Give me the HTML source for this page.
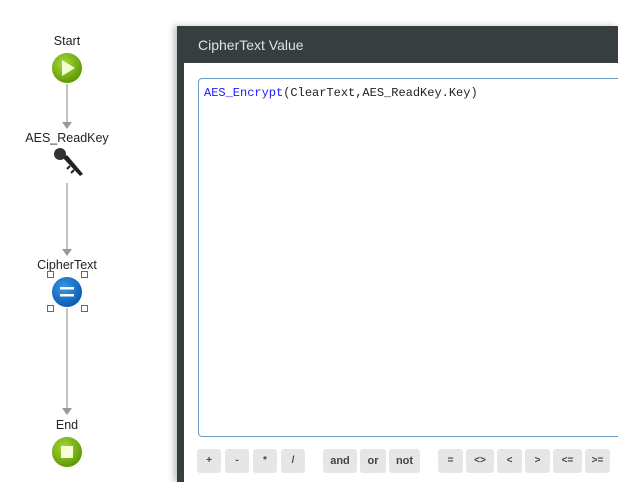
<!DOCTYPE html>
<html><head><style>
html,body{margin:0;width:618px;height:482px;overflow:hidden;}
body{background:#fff;position:relative;font-family:"Segoe UI","Liberation Sans",sans-serif;}
.lbl{position:absolute;font-size:12.5px;color:#222;width:120px;text-align:center;left:7px;}
.dlg{position:absolute;left:177px;top:26px;width:441px;height:456px;background:#363e3f;box-shadow:-3px 0 6px rgba(0,0,0,.25);}
.hdr{position:absolute;left:198px;top:37px;color:#dfe3e3;font-size:14px;}
.body{position:absolute;left:184px;top:63px;width:434px;height:419px;background:#fff;}
.ed{position:absolute;left:198px;top:78px;width:440px;height:357px;border:1px solid #6f9cc6;border-radius:4px;}
.code{position:absolute;left:204px;top:86px;font-family:"Liberation Mono",monospace;font-size:12px;color:#222;}
.b{position:absolute;top:449px;height:24px;background:#e6e6e6;border-radius:3px;font-family:"Liberation Sans",sans-serif;font-size:10px;color:#444;text-align:center;line-height:24px;font-weight:bold;}
.h{position:absolute;width:5px;height:5px;border:1px solid #1a7ad4;background:#fff;}
</style></head><body>
<svg width="140" height="482" style="position:absolute;left:0;top:0">
<defs>
<radialGradient id="g" cx="40%" cy="35%" r="65%"><stop offset="0" stop-color="#a6d93a"/><stop offset="1" stop-color="#5e9a05"/></radialGradient>
<radialGradient id="bl" cx="40%" cy="35%" r="65%"><stop offset="0" stop-color="#3a95e6"/><stop offset="1" stop-color="#0a5db3"/></radialGradient>
</defs>
<g stroke="#a0a0a0" stroke-width="1.3"><line x1="67" y1="84" x2="67" y2="124"/><line x1="67" y1="183" x2="67" y2="251"/><line x1="67" y1="308" x2="67" y2="410"/></g>
<g fill="#999"><path d="M62 122h10l-5 7z"/><path d="M62 249h10l-5 7z"/><path d="M62 408h10l-5 7z"/></g>
<circle cx="67" cy="68" r="15" fill="url(#g)"/><path d="M62 60v16l13-8z" fill="#f4ffd0"/>
<g><circle cx="60" cy="154" r="6" fill="#333"/><path d="M63 158l17 18 3-2-16-19z" fill="#222"/><path d="M70 166l-3 3M74 170l-3 3" stroke="#222" stroke-width="2"/></g>
<circle cx="67" cy="292" r="15" fill="url(#bl)"/><rect x="60" y="287" width="14" height="2.5" fill="#fff"/><rect x="60" y="294" width="14" height="2.5" fill="#fff"/>
<circle cx="67" cy="452" r="15" fill="url(#g)"/><rect x="61" y="446" width="12" height="12" fill="#f6ffd6"/>
</svg>
<div class="lbl" style="top:34px">Start</div>
<div class="lbl" style="top:131px">AES_ReadKey</div>
<div class="lbl" style="top:258px">CipherText</div>
<div class="lbl" style="top:418px">End</div>
<div class="h" style="left:47px;top:271px"></div><div class="h" style="left:81px;top:271px"></div>
<div class="h" style="left:47px;top:305px"></div><div class="h" style="left:81px;top:305px"></div>
<div class="dlg"></div>
<div class="hdr">CipherText Value</div>
<div class="body"></div>
<div class="ed"></div>
<div class="code"><span style="color:#1a1aff">AES_Encrypt</span>(ClearText,AES_ReadKey.Key)</div>
<div class="b" style="left:197px;width:24px">+</div>
<div class="b" style="left:225px;width:24px">-</div>
<div class="b" style="left:253px;width:24px">*</div>
<div class="b" style="left:281px;width:24px">/</div>
<div class="b" style="left:323px;width:34px;font-size:11px">and</div>
<div class="b" style="left:360px;width:26px;font-size:11px">or</div>
<div class="b" style="left:389px;width:31px;font-size:11px">not</div>
<div class="b" style="left:438px;width:25px">=</div>
<div class="b" style="left:466px;width:28px">&lt;&gt;</div>
<div class="b" style="left:497px;width:25px">&lt;</div>
<div class="b" style="left:525px;width:25px">&gt;</div>
<div class="b" style="left:553px;width:29px">&lt;=</div>
<div class="b" style="left:585px;width:25px">&gt;=</div>
</body></html>
